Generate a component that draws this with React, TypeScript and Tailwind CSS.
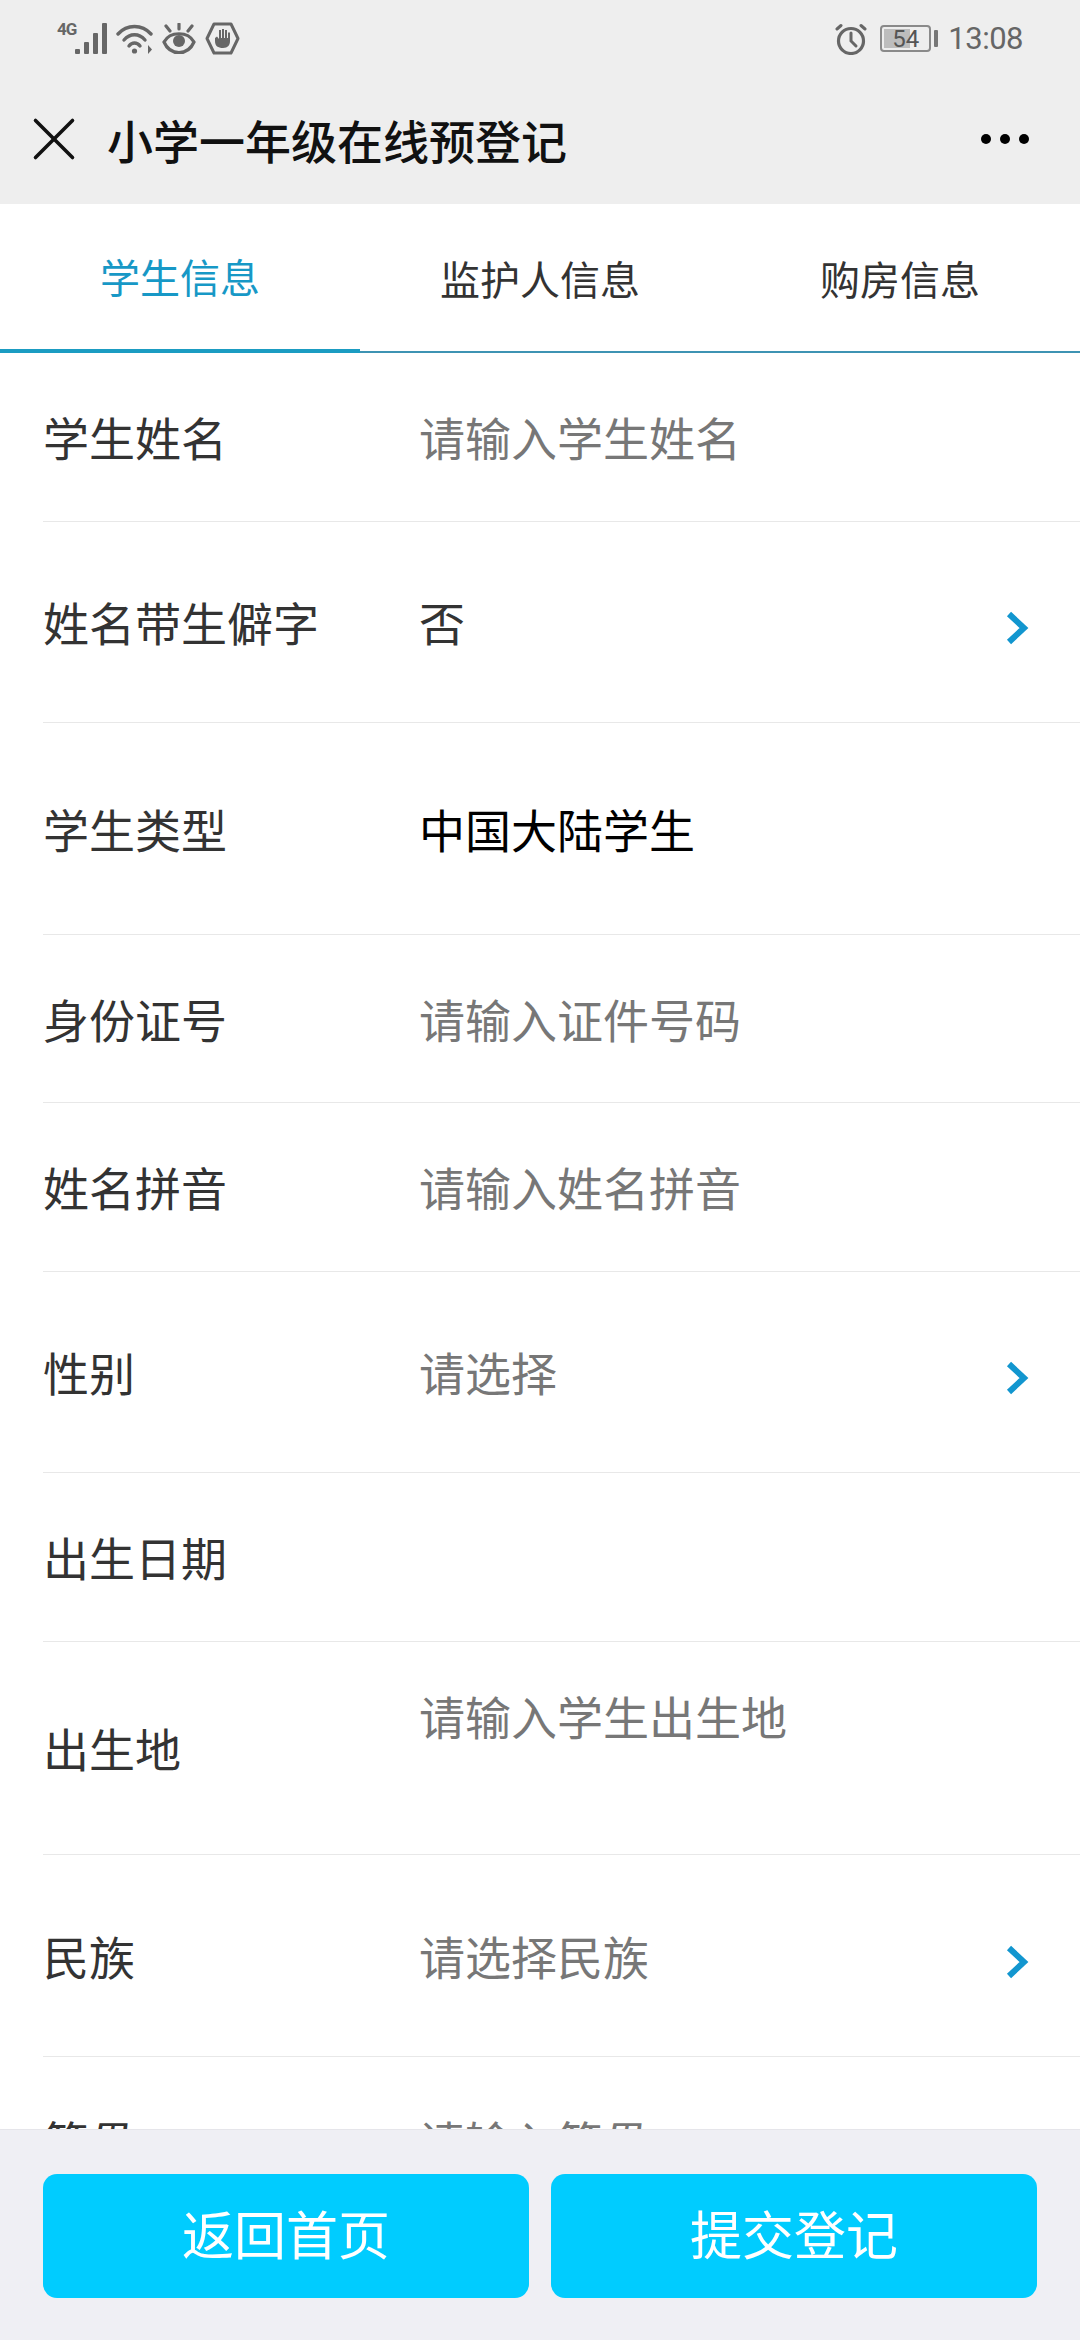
import { X } from "lucide-react";

const FONT = "font-['Noto_Sans_CJK_SC','Noto_Sans',sans-serif]";

type Row = {
  label: string;
  value?: string;
  tone?: "hint" | "dark" | "black";
  arrow?: boolean;
  top?: boolean;
  height: string;
};

const rows: Row[] = [
  { label: "学生姓名", value: "请输入学生姓名", tone: "hint", height: "h-[169px]" },
  { label: "姓名带生僻字", value: "否", tone: "dark", arrow: true, height: "h-[201px]" },
  { label: "学生类型", value: "中国大陆学生", tone: "black", height: "h-[212px]" },
  { label: "身份证号", value: "请输入证件号码", tone: "hint", height: "h-[168px]" },
  { label: "姓名拼音", value: "请输入姓名拼音", tone: "hint", height: "h-[169px]" },
  { label: "性别", value: "请选择", tone: "hint", arrow: true, height: "h-[201px]" },
  { label: "出生日期", height: "h-[169px]" },
  { label: "出生地", value: "请输入学生出生地", tone: "hint", top: true, height: "h-[213px]" },
  { label: "民族", value: "请选择民族", tone: "hint", arrow: true, height: "h-[202px]" },
  { label: "籍贯", value: "请输入籍贯", tone: "hint", height: "h-[168px]" },
];

function StatusLeft() {
  return (
    <div className="flex items-center">
      <span className="mb-[18px] w-[18px] font-['Roboto',sans-serif] text-[17px] leading-none font-bold tracking-[-1px] text-[#666]">
        4G
      </span>
      <svg width="33" height="32" viewBox="0 0 33 32" fill="#666">
        <rect x="0" y="26" width="5" height="5" rx="1" />
        <rect x="9" y="19" width="5" height="12" rx="1" />
        <rect x="18" y="10" width="5" height="21" rx="1" />
        <rect x="27" y="0" width="5" height="31" rx="1" />
      </svg>
      <svg className="ml-[8px]" width="38" height="32" viewBox="0 0 38 32" fill="none" stroke="#666" strokeWidth="3.4" strokeLinecap="round">
        <path d="M2 11C11 1 26 1 35 11" />
        <path d="M8 17C14 10 23 10 29 17" />
        <path d="M13 23C16 19 21 19 24 23" />
        <circle cx="18.5" cy="28" r="2.6" fill="#666" stroke="none" />
        <path d="M32 22V31L36 26.5Z" fill="#666" stroke="none" />
      </svg>
      <svg className="ml-[8px]" width="34" height="32" viewBox="0 0 34 32" fill="none" stroke="#666" strokeWidth="3.2" strokeLinecap="round">
        <path d="M2 19C8 8 26 8 32 19C26 33 8 33 2 19Z" />
        <circle cx="17" cy="18" r="6" fill="#666" stroke="none" />
        <path d="M17 1V6M4 3L8 8M30 3L26 8" />
      </svg>
      <svg className="ml-[9px]" width="35" height="33" viewBox="0 0 35 33" fill="none">
        <path d="M9 2H26L33 16.5L26 31H9L2 16.5Z" stroke="#666" strokeWidth="3" strokeLinejoin="round" />
        <path
          d="M10 16V19C10 24 13 26 18 26C23 26 25 23 25 19V10.5H23V16H22V8H20V16H19V7H17V16H16V8H14V17L12 14.5Z"
          fill="#666"
        />
      </svg>
    </div>
  );
}

function StatusRight() {
  return (
    <div className="flex items-center">
      <svg width="32" height="32" viewBox="0 0 32 32" fill="none" stroke="#666" strokeLinecap="round">
        <circle cx="16" cy="18" r="12.5" strokeWidth="3.2" />
        <path d="M16 10V18L21 23" strokeWidth="3" />
        <path d="M2 6L6 2.5M30 6L26 2.5" strokeWidth="3" />
      </svg>
      <div className="relative ml-[13px] h-[27px] w-[51px] rounded-[4px] border-2 border-[#8a8a8a] p-[2px]">
        <div className="h-full w-[26px] bg-[#bdbdbd]" />
        <span className="absolute inset-0 flex items-center justify-center font-['Roboto',sans-serif] text-[24px] leading-none text-[#555]">
          54
        </span>
      </div>
      <div className="ml-[3px] h-[17px] w-[4px] rounded-[1px] bg-[#777]" />
      <span className="ml-[10px] font-['Roboto',sans-serif] text-[31px] leading-none tracking-[-0.5px] text-[#666]">
        13:08
      </span>
    </div>
  );
}

function Arrow() {
  return (
    <svg className="mt-[12px] shrink-0" width="24" height="34" viewBox="0 0 24 34" fill="none" stroke="#1296cf" strokeWidth="6">
      <path d="M3 3L18 17L3 31" />
    </svg>
  );
}

function FormRow({ row }: { row: Row }) {
  return (
    <div className={`ml-[43px] flex ${row.height} shrink-0 items-center border-b border-[#e8e8e8] pr-[50px]`}>
      <div className="w-[376px] shrink-0 pb-[2px] text-[46px] leading-none text-[#333]">{row.label}</div>
      <div
        className={`flex-1 text-[46px] leading-none ${row.top ? "mb-[67px]" : "mb-[2px]"} ${
          row.tone === "hint" ? "text-[#777]" : row.tone === "black" ? "text-black" : "text-[#333]"
        }`}
      >
        {row.value}
      </div>
      {row.arrow && <Arrow />}
    </div>
  );
}

export default function App() {
  return (
    <div className={`flex h-[2340px] w-[1080px] flex-col overflow-hidden bg-white ${FONT}`}>
      <div className="h-[204px] shrink-0 bg-[#eeeeee]">
        <div className="flex h-[74px] items-center justify-between pt-[3px] pr-[57px] pl-[57px]">
          <StatusLeft />
          <StatusRight />
        </div>
        <div className="flex h-[130px] items-center pr-[51px] pl-[17px]">
          <X className="text-[#111]" size={74} strokeWidth={3.6} absoluteStrokeWidth />
          <h1 className="ml-[16px] text-[46px] leading-none font-medium text-[#111]">小学一年级在线预登记</h1>
          <div className="ml-auto flex gap-[9px]">
            <span className="size-[10px] rounded-full bg-black" />
            <span className="size-[10px] rounded-full bg-black" />
            <span className="size-[10px] rounded-full bg-black" />
          </div>
        </div>
      </div>

      <div className="flex h-[149px] shrink-0 border-b-2 border-[#3d93b3]">
        <div className="-mb-[2px] flex flex-1 items-center justify-center border-b-4 border-[#1b9cc2] pb-[1px] text-[40px] text-[#1798c6]">
          学生信息
        </div>
        <div className="flex flex-1 items-center justify-center text-[40px] text-[#333]">监护人信息</div>
        <div className="flex flex-1 items-center justify-center text-[40px] text-[#333]">购房信息</div>
      </div>

      <div className="flex min-h-0 flex-1 flex-col overflow-hidden">
        {rows.map((row) => (
          <FormRow key={row.label} row={row} />
        ))}
      </div>

      <div className="flex h-[211px] shrink-0 gap-[22px] border-t border-[#e5e5ea] bg-[#efeff4] px-[43px] pt-[44px]">
        <button className="h-[124px] flex-1 rounded-[14px] bg-[#00ccff] pb-[6px] text-[52px] text-white">返回首页</button>
        <button className="h-[124px] flex-1 rounded-[14px] bg-[#00ccff] pb-[6px] text-[52px] text-white">提交登记</button>
      </div>
    </div>
  );
}
